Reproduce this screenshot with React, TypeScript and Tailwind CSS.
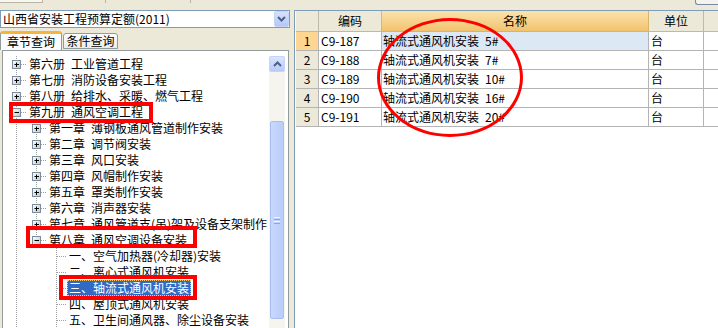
import React from "react";

type Row = {
  level: 1 | 2 | 3;
  text: string;
  exp?: "+" | "-";
  sel?: boolean;
  // vertical connector per level cell: "full" | "top" | "none"
  v: ("full" | "top" | "none")[];
};

const tree: Row[] = [
  { level: 1, text: "第六册\u2002工业管道工程", exp: "+", v: ["full"] },
  { level: 1, text: "第七册\u2002消防设备安装工程", exp: "+", v: ["full"] },
  { level: 1, text: "第八册\u2002给排水、采暖、燃气工程", exp: "+", v: ["full"] },
  { level: 1, text: "第九册\u2002通风空调工程", exp: "-", v: ["full"] },
  { level: 2, text: "第一章\u2002薄钢板通风管道制作安装", exp: "+", v: ["full", "full"] },
  { level: 2, text: "第二章\u2002调节阀安装", exp: "+", v: ["full", "full"] },
  { level: 2, text: "第三章\u2002风口安装", exp: "+", v: ["full", "full"] },
  { level: 2, text: "第四章\u2002风帽制作安装", exp: "+", v: ["full", "full"] },
  { level: 2, text: "第五章\u2002罩类制作安装", exp: "+", v: ["full", "full"] },
  { level: 2, text: "第六章\u2002消声器安装", exp: "+", v: ["full", "full"] },
  { level: 2, text: "第七章\u2002通风管道支(吊)架及设备支架制作", exp: "+", v: ["full", "full"] },
  { level: 2, text: "第八章\u2002通风空调设备安装", exp: "-", v: ["full", "top"] },
  { level: 3, text: "一、空气加热器(冷却器)安装", v: ["full", "none", "full"] },
  { level: 3, text: "二、离心式通风机安装", v: ["full", "none", "full"] },
  { level: 3, text: "三、轴流式通风机安装", sel: true, v: ["full", "none", "full"] },
  { level: 3, text: "四、屋顶式通风机安装", v: ["full", "none", "full"] },
  { level: 3, text: "五、卫生间通风器、除尘设备安装", v: ["full", "none", "full"] },
];

const items = [
  { no: 1, code: "C9-187", name: "轴流式通风机安装\u20025#", unit: "台" },
  { no: 2, code: "C9-188", name: "轴流式通风机安装\u20027#", unit: "台" },
  { no: 3, code: "C9-189", name: "轴流式通风机安装\u200210#", unit: "台" },
  { no: 4, code: "C9-190", name: "轴流式通风机安装\u200216#", unit: "台" },
  { no: 5, code: "C9-191", name: "轴流式通风机安装\u200220#", unit: "台" },
];

function Connector({ own, v, exp }: { own: boolean; v: "full" | "top" | "none"; exp?: "+" | "-" }) {
  return (
    <svg width="20" height="16" className="shrink-0">
      {v !== "none" && (
        <line x1="9.5" y1="0" x2="9.5" y2={v === "full" ? 16 : 8} stroke="#a0a0a0" strokeDasharray="1 1" />
      )}
      {own && <line x1="10" y1="8.5" x2="20" y2="8.5" stroke="#a0a0a0" strokeDasharray="1 1" />}
      {own && exp && (
        <g>
          <defs>
            <linearGradient id="eg" x1="0" y1="0" x2="1" y2="1">
              <stop offset="0" stopColor="#ffffff" />
              <stop offset="1" stopColor="#c8c4b6" />
            </linearGradient>
          </defs>
          <rect x="5.5" y="4.5" width="8" height="8" fill="url(#eg)" stroke="#7b8da2" />
          <line x1="7.5" y1="8.5" x2="12" y2="8.5" stroke="#000" />
          {exp === "+" && <line x1="9.5" y1="6.5" x2="9.5" y2="11" stroke="#000" />}
        </g>
      )}
    </svg>
  );
}

function TreeRow({ row }: { row: Row }) {
  return (
    <div className="flex h-[16px] items-center whitespace-nowrap">
      {row.v.map((v, i) => (
        <Connector key={i} own={i === row.level - 1} v={v} exp={row.exp} />
      ))}
      <span
        className={
          row.sel
            ? "h-[16px] px-[1px] leading-[14px] bg-[#316ac5] text-white border border-dotted border-[#f0d070]"
            : "h-[16px] px-[2px] leading-[16px] text-black"
        }
      >
        {row.text}
      </span>
    </div>
  );
}

export default function App() {
  return (
    <div
      className="relative w-[718px] h-[328px] overflow-hidden bg-[#ece9d8] flex flex-col text-[12px]"
      style={{ fontFamily: '"Noto Sans CJK SC", "Liberation Sans", sans-serif' }}
    >
      {/* toolbar remnants */}
      <div className="h-[10px] flex items-start shrink-0">
        <div className="w-[43px] h-[3px] bg-[#f7f6f1] border-b border-r border-[#b8b5a4]" />
        <div className="ml-[62px] w-px h-[3px] bg-[#b8b5a4]" />
        <div className="ml-[84px] w-px h-[3px] bg-[#b8b5a4]" />
        <div className="ml-auto w-[23px] h-[5px] bg-[#f4f3ee] border-l border-b border-[#7a8aa5] rounded-bl-[3px]" />
      </div>

      <div className="flex flex-1 min-h-0">
        {/* left panel */}
        <div className="w-[290px] flex flex-col shrink-0">
          <div className="h-[18px] bg-white border border-[#7f9db9] flex items-center">
            <span className="flex-1 pl-[2px] leading-[16px] text-black whitespace-nowrap">山西省安装工程预算定额(2011)</span>
            <div className="w-[15px] h-[16px] bg-gradient-to-b from-[#d6e2fd] to-[#b4c8f6] border border-[#c3d3fd] rounded-[2px] flex items-center justify-center">
              <svg width="9" height="6" viewBox="0 0 9 6">
                <path d="M1 1 L4.5 4.5 L8 1" fill="none" stroke="#4d6185" strokeWidth="2" />
              </svg>
            </div>
          </div>

          <div className="mt-[3px] h-[19px] flex items-end shrink-0">
            <div className="h-[19px] w-[62px] bg-[#fcfcfe] border-x border-[#919b9c] border-t-[3px] border-t-[#f5b53d] rounded-t-[3px] flex items-center justify-center text-black leading-[14px]">
              章节查询
            </div>
            <div className="h-[16px] w-[55px] ml-px mb-px bg-gradient-to-b from-white to-[#ecebe6] border border-[#919b9c] rounded-t-[3px] flex items-center justify-center text-black leading-[14px]">
              条件查询
            </div>
          </div>

          <div className="ml-[2px] w-[287px] flex-1 min-h-0 border border-b-0 border-[#919b9c] bg-white pt-[4px] pl-px pr-[3px] flex">
            <div className="flex-1 min-w-0 overflow-hidden pl-[3px] pt-px">
              {tree.map((r, i) => (
                <TreeRow key={i} row={r} />
              ))}
            </div>
            {/* scrollbar */}
            <div className="w-[16px] mt-[1px] flex flex-col bg-[#f5f4ee]">
              <div className="h-[16px] bg-gradient-to-b from-[#dbe5fd] to-[#b7cbf7] border border-[#c3d3fd] rounded-[2px] flex items-center justify-center">
                <svg width="9" height="6" viewBox="0 0 9 6">
                  <path d="M1 5 L4.5 1.5 L8 5" fill="none" stroke="#4d6185" strokeWidth="2" />
                </svg>
              </div>
              <div className="h-[49px]" />
              <div className="h-[198px] mx-px bg-gradient-to-r from-[#c9d8fc] to-[#b9cdf8] border border-[#a9bff0] rounded-[2px] flex flex-col items-center justify-center gap-[1px]">
                <div className="w-[6px] h-px bg-[#eef3fe]" />
                <div className="w-[6px] h-px bg-[#8aa6e4]" />
                <div className="w-[6px] h-px bg-[#eef3fe]" />
                <div className="w-[6px] h-px bg-[#8aa6e4]" />
              </div>
            </div>
          </div>
        </div>

        {/* right grid */}
        <div className="ml-[4px] flex-1 border-l border-t border-[#7f9db9] bg-white flex flex-col pl-px">
          <div className="h-[21px] flex shrink-0">
            <div className="w-[23px] bg-[#ece9d8] border-r border-b border-[#bdbaa9]" />
            <div className="w-[63px] bg-[#ece9d8] border-r border-b border-[#bdbaa9] flex items-center justify-center text-black">编码</div>
            <div className="w-[267px] bg-gradient-to-b from-[#fbe2ab] to-[#f1c36d] border-r border-b border-[#d9b36a] flex items-center justify-center text-black">名称</div>
            <div className="w-[55px] bg-[#ece9d8] border-r border-b border-[#bdbaa9] flex items-center justify-center text-black">单位</div>
            <div className="flex-1 bg-[#ece9d8] border-b border-[#bdbaa9]" />
          </div>
          {items.map((it) => (
            <div key={it.no} className="h-[19px] flex shrink-0 text-black">
              <div
                className={
                  it.no === 1
                    ? "w-[23px] bg-[#ffd592] border-r border-b border-[#b4b4b4] flex items-center justify-center"
                    : "w-[23px] bg-[#ece9d8] border-r border-b border-[#b4b4b4] flex items-center justify-center"
                }
              >
                {it.no}
              </div>
              <div className="w-[63px] border-r border-b border-[#b4b4b4] flex items-center pl-[2px]">{it.code}</div>
              <div
                className={
                  it.no === 1
                    ? "w-[267px] bg-[#dde8f5] border-r border-b border-[#b4b4b4] flex items-center pl-px whitespace-nowrap"
                    : "w-[267px] border-r border-b border-[#b4b4b4] flex items-center pl-px whitespace-nowrap"
                }
              >
                {it.name}
              </div>
              <div className="w-[55px] border-r border-b border-[#b4b4b4] flex items-center pl-[2px]">{it.unit}</div>
              <div className="flex-1 border-b border-[#b4b4b4]" />
            </div>
          ))}
        </div>
      </div>

      {/* red annotation marks */}
      <div className="absolute left-[9px] top-[102px] w-[144px] h-[21px] border-[4px] border-[#ff0000] pointer-events-none" />
      <div className="absolute left-[26px] top-[226px] w-[171px] h-[22px] border-[4px] border-[#ff0000] pointer-events-none" />
      <div className="absolute left-[59px] top-[275px] w-[138px] h-[25px] border-[4px] border-[#ff0000] pointer-events-none" />
      <div className="absolute left-[377px] top-[18px] w-[146px] h-[119px] rounded-[50%] border-[3px] border-[#ff0000] pointer-events-none" />
    </div>
  );
}
